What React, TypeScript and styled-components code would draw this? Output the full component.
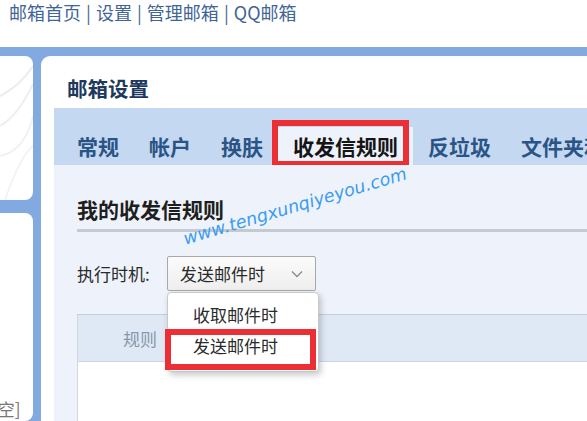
import React from "react";
import styled, { createGlobalStyle } from "styled-components";

const Global = createGlobalStyle`
  html, body { margin: 0; padding: 0; background: #fff; overflow: hidden; }
  body { width: 587px; height: 421px; font-family: "Noto Sans CJK SC", "Noto Sans", sans-serif; }
`;

const Page = styled.div`
  position: relative;
  width: 587px;
  height: 421px;
  overflow: hidden;
  display: flex;
  flex-direction: column;
`;

const TopNav = styled.div`
  height: 47px;
  flex-shrink: 0;
  padding-left: 9px;
  box-sizing: border-box;
  font-size: 18px;
  word-spacing: 1px;
  line-height: 24px;
  color: #3f6597;
  white-space: nowrap;
`;

const Frame = styled.div`
  flex: 1;
  background: #82aae0;
  padding-top: 9px;
  display: flex;
  gap: 8px;
  min-height: 0;
`;

const LeftCol = styled.div`
  width: 33px;
  display: flex;
  flex-direction: column;
  gap: 13px;
  flex-shrink: 0;
`;

const LeftCard = styled.div<{ $h?: number }>`
  background: #fff;
  border-radius: 0 8px 8px 0;
  height: ${(p) => (p.$h ? `${p.$h}px` : "auto")};
  flex: ${(p) => (p.$h ? "none" : "1")};
  overflow: hidden;
  position: relative;
`;

const Deco = styled.svg`
  display: block;
`;

const EmptyText = styled.div`
  margin-top: 183px;
  margin-left: -8px;
  font-size: 17px;
  color: #777;
  white-space: nowrap;
`;

const Main = styled.div`
  flex: 1;
  background: #fff;
  border-top-left-radius: 9px;
  display: flex;
  flex-direction: column;
  padding-left: 13px;
  min-width: 0;
  min-height: 0;
`;

const Title = styled.div`
  height: 52px;
  flex-shrink: 0;
  padding-left: 13px;
  box-sizing: border-box;
  font-size: 20.5px;
  font-weight: 700;
  color: #1d3a5e;
  line-height: 64px;
  white-space: nowrap;
`;

const TabBar = styled.div`
  height: 57px;
  flex-shrink: 0;
  background: #c4d8f1;
  display: flex;
  align-items: flex-end;
  padding-left: 8px;
  white-space: nowrap;
`;

const Tab = styled.div<{ $active?: boolean }>`
  position: relative;
  height: 38px;
  line-height: 38px;
  padding: 0 15px;
  font-size: 21px;
  font-weight: 700;
  color: ${(p) => (p.$active ? "#151515" : "#2a5486")};
  background: ${(p) => (p.$active ? "#eef3fb" : "transparent")};
  &::after {
    content: "";
    display: ${(p) => (p.$active ? "block" : "none")};
    position: absolute;
    left: -6px;
    right: 4px;
    top: -7px;
    bottom: -2px;
    border: 6px solid #ec2f35;
  }
`;

const Content = styled.div`
  flex: 1;
  min-height: 0;
  background: #eef3fb;
  padding: 30px 0 0 23px;
  position: relative;
`;

const SectionTitle = styled.div`
  font-size: 21px;
  font-weight: 700;
  color: #1e1e1e;
  line-height: 28px;
  white-space: nowrap;
`;

const Divider = styled.div`
  margin-top: 6px;
  height: 3px;
  background: #c5c9d0;
`;

const TimingRow = styled.div`
  margin-top: 24px;
  display: flex;
  align-items: center;
  height: 35px;
  position: relative;
`;

const Label = styled.div`
  width: 90px;
  font-size: 17px;
  color: #2a2a2a;
  white-space: nowrap;
`;

const Select = styled.div`
  width: 149px;
  height: 35px;
  box-sizing: border-box;
  border: 1px solid #a8a8a8;
  border-radius: 2px;
  background: linear-gradient(#fbfbfb, #eeeeee);
  display: flex;
  align-items: center;
  justify-content: space-between;
  padding: 0 12px 0 12px;
  font-size: 17px;
  color: #2a2a2a;
  white-space: nowrap;
`;

const Menu = styled.div`
  position: absolute;
  left: 90px;
  top: 36px;
  width: 152px;
  box-sizing: border-box;
  background: #fff;
  border: 1px solid #c9c9c9;
  border-radius: 4px;
  box-shadow: 2px 3px 6px rgba(0, 0, 0, 0.22);
  padding: 6px 0 10px;
  z-index: 2;
`;

const MenuItem = styled.div<{ $marked?: boolean }>`
  position: relative;
  height: 31px;
  line-height: 31px;
  padding-left: 25px;
  font-size: 17px;
  color: #2a2a2a;
  white-space: nowrap;
  &::after {
    content: "";
    display: ${(p) => (p.$marked ? "block" : "none")};
    position: absolute;
    left: -3px;
    right: 2px;
    top: -1px;
    bottom: -9px;
    border: 6px solid #ec2f35;
  }
`;

const Table = styled.div`
  margin-top: 23px;
  border-left: 1px solid #d2d7de;
  border-top: 1px solid #c9ced5;
  background: #fff;
  height: 200px;
`;

const TableHead = styled.div`
  height: 46px;
  background: #dfe9f6;
  border-bottom: 1px solid #ccd6e3;
  display: flex;
  align-items: center;
  padding-left: 45px;
  font-size: 17px;
  color: #8797aa;
`;

const Watermark = styled.div`
  position: absolute;
  left: 295px;
  top: 206px;
  transform: translate(-50%, -50%) rotate(-16.5deg);
  font-family: "DejaVu Sans", sans-serif;
  font-style: italic;
  font-size: 17.5px;
  color: #3b9bf0;
  white-space: nowrap;
  z-index: 5;
  pointer-events: none;
`;

const tabs = ["常规", "帐户", "换肤", "收发信规则", "反垃圾", "文件夹和标签"];

export default function App() {
  return (
    <>
      <Global />
      <Page>
        <TopNav>邮箱首页 | 设置 | 管理邮箱 | QQ邮箱</TopNav>
        <Frame>
          <LeftCol>
            <LeftCard $h={144}>
              <Deco width="33" height="144" viewBox="0 0 33 144">
                <path d="M0 40 Q20 30 33 10" stroke="#ececef" strokeWidth="2" fill="none" />
                <path d="M0 70 Q18 60 33 28" stroke="#eeeef1" strokeWidth="2" fill="none" />
                <path d="M0 100 Q25 95 33 60" stroke="#efeff2" strokeWidth="1.5" fill="none" />
                <path d="M5 144 Q20 100 33 90" stroke="#f0f0f3" strokeWidth="1.5" fill="none" />
              </Deco>
            </LeftCard>
            <LeftCard>
              <EmptyText>[空]</EmptyText>
            </LeftCard>
          </LeftCol>
          <Main>
            <Title>邮箱设置</Title>
            <TabBar>
              {tabs.map((t) => (
                <Tab key={t} $active={t === "收发信规则"}>
                  {t}
                </Tab>
              ))}
            </TabBar>
            <Content>
              <SectionTitle>我的收发信规则</SectionTitle>
              <Divider />
              <TimingRow>
                <Label>执行时机:</Label>
                <Select>
                  <span>发送邮件时</span>
                  <svg width="12" height="8" viewBox="0 0 12 8">
                    <path d="M1 1.5 L6 6.5 L11 1.5" stroke="#8a8a8a" strokeWidth="1.3" fill="none" />
                  </svg>
                </Select>
                <Menu>
                  <MenuItem>收取邮件时</MenuItem>
                  <MenuItem $marked>发送邮件时</MenuItem>
                </Menu>
              </TimingRow>
              <Table>
                <TableHead>规则</TableHead>
              </Table>
            </Content>
          </Main>
        </Frame>
        <Watermark>www.tengxunqiyeyou.com</Watermark>
      </Page>
    </>
  );
}
